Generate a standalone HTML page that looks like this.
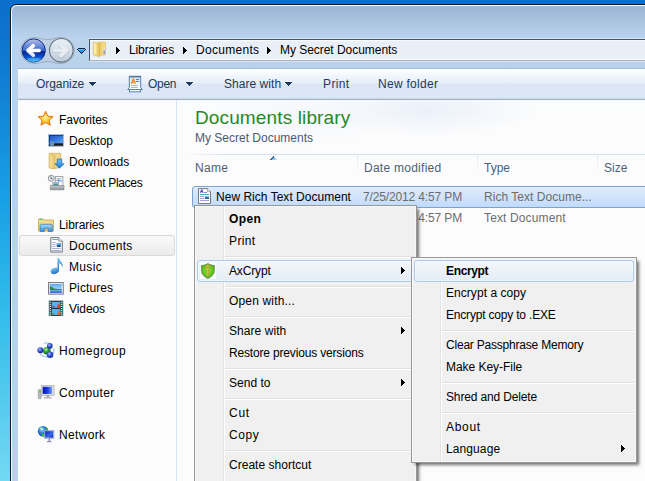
<!DOCTYPE html>
<html><head><meta charset="utf-8">
<style>
*{margin:0;padding:0;box-sizing:border-box}
html,body{width:645px;height:481px;overflow:hidden}
body{position:relative;font-family:"Liberation Sans",sans-serif;font-size:12px;
background:linear-gradient(#0b6dcc 0px,#0f7bd1 70px,#18a0e6 200px,#30bcea 310px,#74d8f2 481px)}
.a{position:absolute}
.t{position:absolute;white-space:nowrap;line-height:16px;font-size:12px;letter-spacing:-0.2px}
#win{left:10px;top:4px;width:700px;height:520px;border:1px solid #121820;border-radius:6px 0 0 0;
background:linear-gradient(#9bb4d2 0px,#bcd3ee 34px,#b9d1ea 60px);overflow:hidden}
#win:before{content:"";position:absolute;left:0;top:0;right:0;bottom:0;border-left:1px solid #f4f7fb;border-top:1px solid #fafcfe;border-radius:6px 0 0 0}
#addr{left:89px;top:39px;width:600px;height:22px;background:linear-gradient(#ffffff 0px,#f0f4fa 1px,#e9eff7 2px,#e9eff7 18px,#edf2f9 19px,#fefefe 20px);border:1px solid #4a5560;border-bottom-color:#a8b4c0;box-shadow:0 -1px 0 #d4e4f8,0 1px 0 #d6e2ef}
#tb{left:18px;top:68px;width:640px;height:32px;border-top:1px solid #a5bdd7;border-bottom:1px solid #a0b0c4;background:linear-gradient(#ffffff 0px,#fcfdff 1px,#e6eef9 14px,#dce5f3 15px,#dbe6f4 27px,#e2edf9 28px,#d0dcea 29px,#d0dcea 30px)}
#content{left:18px;top:100px;width:640px;height:400px;background:#fcfcfc}
#nav{left:18px;top:100px;width:158px;height:400px;background:#fcfcfc}
#navb{left:176px;top:100px;width:1px;height:400px;background:#d5e4f4}
.tbt{color:#1e395b}
.nav{color:#000}
.menu{background:#f0f0f0;border:1px solid #979797;box-shadow:3px 3px 3px -1px rgba(0,0,0,.55),inset 0 0 0 1px #f8f8f8}
.gut{background:#e2e3e3;width:1px;box-shadow:1px 0 0 #fff}
.sep{height:1px;background:#e0e0e0;box-shadow:0 1px 0 #fff}
.hl{border:1px solid #a8cbf3;border-radius:3px;background:linear-gradient(#f4f6f9,#e4ecf7);box-shadow:inset 0 0 0 1px rgba(255,255,255,.45)}
.mt{color:#000}
.arr{width:0;height:0;border-top:3.5px solid transparent;border-bottom:3.5px solid transparent;border-left:4px solid #000}
</style></head><body>
<div id="win" class="a"></div>
<!-- nav buttons -->
<svg class="a" style="left:17px;top:35px" width="74" height="31" viewBox="0 0 74 31">
 <defs>
  <linearGradient id="bkt" x1="0" y1="0" x2="0" y2="1"><stop offset="0" stop-color="#b8c0e8"/><stop offset=".5" stop-color="#3a66d0"/><stop offset=".53" stop-color="#08228a"/><stop offset=".78" stop-color="#0a50d0"/><stop offset="1" stop-color="#30c4ff"/></linearGradient>
  <linearGradient id="fw" x1="0" y1="0" x2="0" y2="1"><stop offset="0" stop-color="#eaf0f6"/><stop offset=".5" stop-color="#d4dfea"/><stop offset="1" stop-color="#bccbdb"/></linearGradient>
  <linearGradient id="ar" x1="0" y1="0" x2="0" y2="1"><stop offset="0" stop-color="#fff"/><stop offset="1" stop-color="#dfe4ee"/></linearGradient>
  <linearGradient id="dd" x1="0" y1="0" x2="0" y2="1"><stop offset="0" stop-color="#52b8f0"/><stop offset="1" stop-color="#1a4f98"/></linearGradient>
 </defs>
 <path d="M16.7 2.5 C22 2.5 25 4.5 30.3 4.5 C35.5 4.5 38.5 2.5 44.3 2.5 A13 13 0 0 1 44.3 28.5 C38.5 28.5 35.5 26.5 30.3 26.5 C25 26.5 22 28.5 16.7 28.5 A13 13 0 0 1 16.7 2.5 Z" fill="#c0d0e3" stroke="#97a8bc" stroke-width="1" opacity=".9"/>
 <circle cx="16.7" cy="15.5" r="11.6" fill="url(#bkt)" stroke="#0b2f86" stroke-width="1"/>
 <ellipse cx="16.7" cy="25" rx="7" ry="2.3" fill="#7ad8ff" opacity=".35"/>
 <path d="M16.2 10.8 L11 15.5 L16.2 20.2" fill="none" stroke="url(#ar)" stroke-width="3.8" stroke-linecap="round" stroke-linejoin="round"/>
 <path d="M12 15.5 L22.3 15.5" stroke="#fff" stroke-width="3.4" stroke-linecap="round"/>
 <circle cx="44.3" cy="15.3" r="11.8" fill="url(#fw)" stroke="#66727f" stroke-width="1.1"/>
 <g transform="translate(0 .6)" opacity=".5"><path d="M44 10.5 L49.5 15.5 L44 20.5" fill="none" stroke="#9aa8b6" stroke-width="4.4" stroke-linecap="round" stroke-linejoin="round"/><path d="M37.5 15.5 L48.5 15.5" stroke="#9aa8b6" stroke-width="4" stroke-linecap="round"/></g>
 <path d="M44 10.5 L49.5 15.5 L44 20.5" fill="none" stroke="#e6ecf2" stroke-width="3.8" stroke-linecap="round" stroke-linejoin="round"/>
 <path d="M37.5 15.5 L48.5 15.5" stroke="#e6ecf2" stroke-width="3.4" stroke-linecap="round"/>

</svg>
<svg class="a" style="left:77px;top:48px" width="9" height="6" viewBox="77 48 9 6" shape-rendering="crispEdges"><path d="M78 48h7v1h-7z M77 49h1v1h-1z M85 49h1v1h-1z M78 50h1v1h-1z M84 50h1v1h-1z M79 51h1v1h-1z M83 51h1v1h-1z M80 52h1v1h-1z M82 52h1v1h-1z M81 53h1v1h-1z" fill="#0c2344"/><path d="M78 49h7v1h-7z" fill="#44c4f2"/><path d="M79 50h5v1h-5z" fill="#3aa0e6"/><path d="M80 51h3v1h-3z" fill="#3a80d6"/><path d="M81 52h1v1h-1z" fill="#3a6ccc"/></svg>
<div id="addr" class="a"></div>
<!-- folder icon in address -->
<svg class="a" style="left:91px;top:40px" width="17" height="18" viewBox="91 40 17 18">
 <defs><linearGradient id="af1" x1="0" y1="0" x2="1" y2="0"><stop offset="0" stop-color="#f9eaa8"/><stop offset=".6" stop-color="#f2d77c"/><stop offset="1" stop-color="#dcb850"/></linearGradient>
 <linearGradient id="af2" x1="0" y1="0" x2="1" y2="0"><stop offset="0" stop-color="#e8c860"/><stop offset="1" stop-color="#f6e090"/></linearGradient></defs>
 <path d="M98 42.2 L104.8 42.2 Q105.5 42.2 105.5 43 L105.5 55 L98 55.5 Z" fill="url(#af2)" stroke="#d8b450" stroke-width=".6"/>
 <path d="M93.3 42.3 L98.8 43.6 L99.5 44.3 L99.5 56.5 L93.8 55.2 L93.3 54.6 Z" fill="url(#af1)" stroke="#d3ae48" stroke-width=".6"/>
 <path d="M94.5 43.5 L95.5 43.8 L95.5 53.5 L94.5 53.2 Z" fill="#fdf6d8"/>
 <rect x="103.6" y="50.5" width="1.1" height="3.2" fill="#3a8ee0"/>
 <rect x="103.6" y="48.8" width="1.1" height="1.5" fill="#e8eef6"/>
</svg>
<svg class="a" style="left:116px;top:47px" width="4" height="7" viewBox="0 0 4 7" shape-rendering="crispEdges"><path d="M0 0h1v7h-1z M1 1h1v5h-1z M2 2h1v3h-1z M3 3h1v1h-1z" fill="#000"/></svg>
<div class="t" style="left:129px;top:42px;color:#000;letter-spacing:-0.11px">Libraries</div>
<svg class="a" style="left:183px;top:47px" width="4" height="7" viewBox="0 0 4 7" shape-rendering="crispEdges"><path d="M0 0h1v7h-1z M1 1h1v5h-1z M2 2h1v3h-1z M3 3h1v1h-1z" fill="#000"/></svg>
<div class="t" style="left:196px;top:42px;color:#000;letter-spacing:0.30px">Documents</div>
<svg class="a" style="left:267px;top:47px" width="4" height="7" viewBox="0 0 4 7" shape-rendering="crispEdges"><path d="M0 0h1v7h-1z M1 1h1v5h-1z M2 2h1v3h-1z M3 3h1v1h-1z" fill="#000"/></svg>
<div class="t" style="left:280px;top:42px;color:#000;letter-spacing:-0.04px">My Secret Documents</div>

<div id="tb" class="a"></div>
<div class="t tbt" style="left:36px;top:76px;letter-spacing:-0.06px">Organize</div>
<svg class="a" style="left:89px;top:81px" width="7" height="5" viewBox="0 0 7 5" shape-rendering="crispEdges"><rect x="0" y="0" width="7" height="1" fill="#fff" opacity=".7"/><path d="M0 1h7v1h-7z M1 2h5v1h-5z M2 3h3v1h-3z M3 4h1v1h-1z" fill="#1b3a62"/></svg>
<!-- open icon -->
<svg class="a" style="left:126px;top:74px" width="18" height="20" viewBox="126 74 18 20">
 <defs><linearGradient id="pg" x1="0" y1="0" x2="0" y2="1"><stop offset="0" stop-color="#d8e8f8"/><stop offset="1" stop-color="#ffffff"/></linearGradient></defs>
 <path d="M129.3 76.3 L140.7 76.3 L140.7 87.5 L142.3 89.5 L127.7 89.5 L129.3 87.5 Z" fill="url(#pg)" stroke="#5a82b0" stroke-width="1"/>
 <rect x="129" y="76" width="12" height="1.4" fill="#4a76aa"/>
 <path d="M131.2 84 L133.3 78.8 L135.4 84 M131.8 82.4 L134.8 82.4" fill="none" stroke="#f28a28" stroke-width="1.3"/>
 <rect x="135.8" y="79" width="3.4" height="1" fill="#4a80d2"/>
 <rect x="135.8" y="81" width="3.4" height="1" fill="#4a80d2"/>
 <rect x="131" y="85.2" width="7" height=".8" fill="#9ca8b6"/>
 <rect x="131" y="87.2" width="7" height=".8" fill="#9ca8b6"/>
 <rect x="129.5" y="89.5" width="11" height="2.3" fill="#f4f8fc" stroke="#5a82b0" stroke-width="1"/>
</svg>
<div class="t tbt" style="left:148px;top:76px;letter-spacing:-0.27px">Open</div>
<svg class="a" style="left:186px;top:81px" width="7" height="5" viewBox="0 0 7 5" shape-rendering="crispEdges"><rect x="0" y="0" width="7" height="1" fill="#fff" opacity=".7"/><path d="M0 1h7v1h-7z M1 2h5v1h-5z M2 3h3v1h-3z M3 4h1v1h-1z" fill="#1b3a62"/></svg>
<div class="t tbt" style="left:224px;top:76px;letter-spacing:0.04px">Share with</div>
<svg class="a" style="left:285px;top:81px" width="7" height="5" viewBox="0 0 7 5" shape-rendering="crispEdges"><rect x="0" y="0" width="7" height="1" fill="#fff" opacity=".7"/><path d="M0 1h7v1h-7z M1 2h5v1h-5z M2 3h3v1h-3z M3 4h1v1h-1z" fill="#1b3a62"/></svg>
<div class="t tbt" style="left:323px;top:76px;letter-spacing:0.38px">Print</div>
<div class="t tbt" style="left:378px;top:76px;letter-spacing:0.28px">New folder</div>

<div id="content" class="a"></div>
<div class="a" style="left:177px;top:100px;width:470px;height:54px;background:radial-gradient(ellipse 110px 26px at 250px 10px,rgba(232,239,249,.85),rgba(255,255,255,0)),radial-gradient(ellipse 90px 30px at 120px 18px,rgba(240,244,251,.7),rgba(255,255,255,0)),linear-gradient(#fbfcfd,#fcfcfc)"></div>
<div id="navb" class="a"></div>

<!-- nav pane -->
<svg class="a" style="left:36px;top:109px" width="20" height="19" viewBox="36 109 20 19"><defs><radialGradient id="st" cx="48%" cy="45%" r="55%"><stop offset="0" stop-color="#fff6a8"/><stop offset=".55" stop-color="#fcc62e"/><stop offset="1" stop-color="#f39a1c"/></radialGradient></defs>
<path d="M45.6 111.3 L47.9 116.2 L53.1 116.7 L49.2 120.2 L50.3 125.2 L45.6 122.6 L40.9 125.2 L42 120.2 L38.1 116.7 L43.3 116.2 Z" fill="url(#st)" stroke="#e2781e" stroke-width="1" stroke-linejoin="round"/></svg>
<div class="t nav" style="left:59px;top:112px;letter-spacing:-0.06px">Favorites</div>
<svg class="a" style="left:47px;top:133px" width="18" height="15" viewBox="47 133 18 15"><defs><linearGradient id="dk" x1="0" y1="0" x2="1" y2="1"><stop offset="0" stop-color="#1e4eb8"/><stop offset=".6" stop-color="#3a7ee0"/><stop offset="1" stop-color="#62aaf4"/></linearGradient></defs>
<rect x="48.4" y="134.3" width="15.3" height="12" fill="#c4d6ea" stroke="#8aa6c6" stroke-width=".6"/>
<rect x="49" y="135" width="14" height="8.2" fill="url(#dk)"/>
<rect x="49" y="135" width="14" height=".8" fill="#0a3090"/><rect x="49" y="135" width=".8" height="8.2" fill="#0a3090"/>
<rect x="49" y="143.2" width="14" height="2.6" fill="#1c1a18"/>
<circle cx="51.8" cy="143.6" r="2" fill="#2a78d8" stroke="#9cc8f4" stroke-width=".5"/>
<rect x="50.8" y="142.6" width="1" height="1" fill="#f04a2a"/><rect x="51.9" y="142.6" width="1" height="1" fill="#6ac83a"/><rect x="50.8" y="143.7" width="1" height="1" fill="#3aa0f0"/><rect x="51.9" y="143.7" width="1" height="1" fill="#f8c02a"/></svg>
<div class="t nav" style="left:69px;top:133px;letter-spacing:0.00px">Desktop</div>
<svg class="a" style="left:47px;top:152px" width="19" height="18" viewBox="47 152 19 18"><defs><linearGradient id="dlf" x1="0" y1="0" x2="1" y2="0"><stop offset="0" stop-color="#f7e4a0"/><stop offset="1" stop-color="#e6c466"/></linearGradient><linearGradient id="dla" x1="0" y1="0" x2="0" y2="1"><stop offset="0" stop-color="#6cc4f6"/><stop offset="1" stop-color="#1a78d0"/></linearGradient></defs>
<path d="M49.3 153.3 L60.8 153.3 L60.8 167 L55 168.6 L49.3 168 Z" fill="#f0d88a" stroke="#d2ae50" stroke-width=".7"/>
<path d="M49.3 153.5 L54.8 155.2 L54.8 168.6 L49.3 167.8 Z" fill="url(#dlf)" stroke="#d2ae50" stroke-width=".6"/>
<path d="M57.2 159 L61.8 159 L61.8 163.8 L64 163.8 L59.5 168.3 L55 163.8 L57.2 163.8 Z" fill="url(#dla)" stroke="#1c66b8" stroke-width=".7" stroke-linejoin="round"/></svg>
<div class="t nav" style="left:69px;top:154px;letter-spacing:0.11px">Downloads</div>
<svg class="a" style="left:47px;top:173px" width="19" height="19" viewBox="47 173 19 19"><defs><linearGradient id="tray" x1="0" y1="0" x2="0" y2="1"><stop offset="0" stop-color="#c8ccd0"/><stop offset="1" stop-color="#8a9096"/></linearGradient></defs>
<rect x="55.3" y="176.5" width="7.6" height="9.5" fill="#fafafa" stroke="#8f959b" stroke-width=".8"/>
<rect x="56.5" y="178" width="5" height=".8" fill="#a8aeb4"/>
<rect x="56.5" y="179.8" width="1.5" height="1.2" fill="#9aa2aa"/><circle cx="58.8" cy="180.6" r="1" fill="#2a7ae8"/><circle cx="61" cy="180.8" r=".9" fill="#4aa0f0"/>
<rect x="52.7" y="182.6" width="6" height="3.6" fill="#f0f2f4" stroke="#8f959b" stroke-width=".7"/>
<rect x="53.5" y="183.3" width="4.4" height="2.2" fill="#4a9ad0"/><rect x="53.5" y="184.5" width="4.4" height="1" fill="#3a8a5a"/>
<path d="M50.3 185.6 L64 185.6 L64 189.8 L50.3 189.8 Z" fill="url(#tray)" stroke="#7a8086" stroke-width=".6"/>
<circle cx="51.3" cy="178.3" r="3" fill="#e8eef2" stroke="#80868c" stroke-width=".9"/>
<path d="M51 176.6 L51 178.6 L52.6 178.9" fill="none" stroke="#404850" stroke-width=".8"/></svg>
<div class="t nav" style="left:69px;top:175px;letter-spacing:-0.31px">Recent Places</div>
<svg class="a" style="left:36px;top:216px" width="20" height="18" viewBox="36 216 20 18"><defs><linearGradient id="lbf" x1="0" y1="0" x2="0" y2="1"><stop offset="0" stop-color="#f6e39e"/><stop offset="1" stop-color="#e2bf5c"/></linearGradient><linearGradient id="lba" x1="0" y1="0" x2="0" y2="1"><stop offset="0" stop-color="#a8dcfa"/><stop offset="1" stop-color="#2f8ee0"/></linearGradient></defs>
<path d="M38.5 219 L43 219 L44 220 L53.5 220 L53.5 231 L38.5 231 Z" fill="url(#lbf)" stroke="#c9a448" stroke-width=".8"/>
<rect x="39.5" y="218.7" width="3" height="1.3" fill="#5ac85a"/>
<path d="M40.2 231.5 L40.2 225.5 Q40.2 224.3 41.5 224.3 L51 224.3 Q52.3 224.3 52.3 225.5 L52.3 231.5 L48.2 231.5 L48.2 228.2 L44.3 228.2 L44.3 231.5 Z" fill="url(#lba)" stroke="#2a78c8" stroke-width=".7"/></svg>
<div class="t nav" style="left:59px;top:217px;letter-spacing:-0.09px">Libraries</div>
<div class="a" style="left:19px;top:235px;width:156px;height:21px;border:1px solid #d9d9d9;border-radius:3px;background:linear-gradient(#fafafa,#ebebeb)"></div>
<svg class="a" style="left:49px;top:236px" width="15" height="18" viewBox="49 236 15 18"><path d="M50.8 237.6 L58.8 237.6 L62.3 241.1 L62.3 252 L50.8 252 Z" fill="#fdfdfd" stroke="#6e7378" stroke-width="1"/>
<path d="M58.8 237.6 L58.8 241.1 L62.3 241.1" fill="#f2f2f2" stroke="#6e7378" stroke-width=".8"/>
<rect x="52.2" y="239.2" width="6" height=".8" fill="#3aa0a8"/>
<g fill="#8a90d0"><rect x="52.2" y="242" width="3.4" height=".7"/><rect x="52.2" y="244.1" width="3.4" height=".7"/><rect x="52.2" y="246.2" width="3.4" height=".7"/><rect x="52.2" y="248.2" width="8.6" height=".7"/><rect x="52.2" y="250.2" width="8.6" height=".7"/></g>
<rect x="56.8" y="243" width="4" height="4" fill="#2a5a7a"/><rect x="56.8" y="243" width="4" height="2" fill="#5ab0e8"/></svg>
<div class="t nav" style="left:69px;top:238px;letter-spacing:0.33px">Documents</div>
<svg class="a" style="left:48px;top:256px" width="17" height="20" viewBox="48 256 17 20"><defs><linearGradient id="mu" x1="0" y1="0" x2="0" y2="1"><stop offset="0" stop-color="#7ac8f6"/><stop offset="1" stop-color="#1a6ac8"/></linearGradient></defs>
<path d="M57.5 258 L59 258 Q60 261 62 263 Q63.5 265 62.3 268 Q62.5 264.5 59 263 L59 271 L57.5 271 Z" fill="url(#mu)"/>
<ellipse cx="54.8" cy="270.8" rx="4.3" ry="3.1" transform="rotate(-20 54.8 270.8)" fill="url(#mu)"/></svg>
<div class="t nav" style="left:69px;top:259px;letter-spacing:0.33px">Music</div>
<svg class="a" style="left:47px;top:280px" width="19" height="17" viewBox="47 280 19 17"><defs><linearGradient id="sky" x1="0" y1="0" x2="0" y2="1"><stop offset="0" stop-color="#5aa8f0"/><stop offset="1" stop-color="#d8f2fa"/></linearGradient><linearGradient id="wat" x1="0" y1="0" x2="0" y2="1"><stop offset="0" stop-color="#6ab0e8"/><stop offset="1" stop-color="#1a5ac0"/></linearGradient></defs>
<rect x="48.6" y="282.6" width="14.6" height="11.5" fill="#fff" stroke="#707070" stroke-width="1"/>
<rect x="49.9" y="283.9" width="11.9" height="9" fill="url(#sky)"/>
<path d="M49.9 286 Q52 286.5 54 288.5 Q57 289.3 61.8 289.3 L61.8 290.3 L49.9 290.3 Z" fill="#2a8a3a"/>
<rect x="49.9" y="290.2" width="11.9" height="2.7" fill="url(#wat)"/></svg>
<div class="t nav" style="left:69px;top:280px;letter-spacing:0.11px">Pictures</div>
<svg class="a" style="left:47px;top:299px" width="18" height="19" viewBox="47 299 18 19"><rect x="48.9" y="300.7" width="14.2" height="15.2" fill="#1e2a2a"/><rect x="48.9" y="300.7" width="1" height="15.2" fill="#2a8a80"/><rect x="62.1" y="300.7" width="1" height="15.2" fill="#2a8a80"/><rect x="51.8" y="301.8" width="8.6" height="6.3" fill="#52b2f2"/><rect x="51.8" y="309" width="8.6" height="6" fill="#52b2f2"/><path d="M57.5 305 Q59 303 60.4 304 L60.4 308.1 L56.5 308.1 Z" fill="#d04a3a"/><path d="M52 306 Q54 305 55.5 307 L55.5 308.1 L51.8 308.1 Z" fill="#a04a8a" opacity=".8"/><path d="M58 311 Q59.5 310 60.4 311 L60.4 315 L57 315 Z" fill="#d86a3a"/><path d="M52 313 Q53.5 312.5 54.5 314 L54.5 315 L51.8 315 Z" fill="#5a9a4a" opacity=".8"/><rect x="49.9" y="301.7" width="1.2" height="1.1" fill="#f4f4f4"/><rect x="60.9" y="301.7" width="1.2" height="1.1" fill="#f4f4f4"/><rect x="49.9" y="303.8" width="1.2" height="1.1" fill="#f4f4f4"/><rect x="60.9" y="303.8" width="1.2" height="1.1" fill="#f4f4f4"/><rect x="49.9" y="305.9" width="1.2" height="1.1" fill="#f4f4f4"/><rect x="60.9" y="305.9" width="1.2" height="1.1" fill="#f4f4f4"/><rect x="49.9" y="308.0" width="1.2" height="1.1" fill="#f4f4f4"/><rect x="60.9" y="308.0" width="1.2" height="1.1" fill="#f4f4f4"/><rect x="49.9" y="310.1" width="1.2" height="1.1" fill="#f4f4f4"/><rect x="60.9" y="310.1" width="1.2" height="1.1" fill="#f4f4f4"/><rect x="49.9" y="312.2" width="1.2" height="1.1" fill="#f4f4f4"/><rect x="60.9" y="312.2" width="1.2" height="1.1" fill="#f4f4f4"/><rect x="49.9" y="314.3" width="1.2" height="1.1" fill="#f4f4f4"/><rect x="60.9" y="314.3" width="1.2" height="1.1" fill="#f4f4f4"/></svg>
<div class="t nav" style="left:69px;top:301px;letter-spacing:-0.08px">Videos</div>
<svg class="a" style="left:35px;top:340px" width="20" height="20" viewBox="35 340 20 20"><defs><radialGradient id="hgb" cx="40%" cy="35%" r="60%"><stop offset="0" stop-color="#b0c8ff"/><stop offset=".5" stop-color="#3a5ad8"/><stop offset="1" stop-color="#1a2a98"/></radialGradient><radialGradient id="hgg" cx="40%" cy="35%" r="60%"><stop offset="0" stop-color="#c0f0b0"/><stop offset=".5" stop-color="#2aa82a"/><stop offset="1" stop-color="#0a6a1a"/></radialGradient></defs>
<path d="M40 353 Q42 357 47 357 M44 343.5 Q48 342 51 344.5 M53.5 348 Q54.5 352 52.5 354" fill="none" stroke="#8ab0e0" stroke-width="1.3" opacity=".7"/>
<circle cx="46.8" cy="350.7" r="3.8" fill="url(#hgg)"/>
<circle cx="49.8" cy="345.9" r="2.8" fill="url(#hgb)"/>
<circle cx="40.4" cy="350.3" r="3" fill="url(#hgb)"/>
<circle cx="50" cy="354.8" r="3.3" fill="url(#hgb)"/></svg>
<div class="t nav" style="left:59px;top:343px;letter-spacing:0.50px">Homegroup</div>
<svg class="a" style="left:36px;top:383px" width="20" height="17" viewBox="36 383 20 17"><defs><linearGradient id="scr" x1="0" y1="0" x2="1" y2="0"><stop offset="0" stop-color="#0814b8"/><stop offset=".5" stop-color="#1a3ae0"/><stop offset="1" stop-color="#6a9af0"/></linearGradient></defs>
<rect x="38.3" y="389.5" width="2.8" height="9.2" rx=".8" fill="#b8bcc0" stroke="#7a7e82" stroke-width=".5"/>
<rect x="38.8" y="391" width="1.8" height="1.2" fill="#3ae03a"/>
<rect x="41.5" y="385.3" width="12.6" height="10.4" fill="#dcdcdc" stroke="#a8a8a8" stroke-width=".6"/>
<rect x="42.7" y="386.8" width="9.3" height="7.1" fill="url(#scr)"/>
<rect x="46.5" y="395.7" width="2.6" height="1.5" fill="#a0a0a0"/>
<rect x="44" y="397" width="7.5" height="1.5" fill="#b8b8b8"/></svg>
<div class="t nav" style="left:59px;top:385px;letter-spacing:0.36px">Computer</div>
<svg class="a" style="left:36px;top:424px" width="20" height="20" viewBox="36 424 20 20"><defs><radialGradient id="glb" cx="40%" cy="35%" r="65%"><stop offset="0" stop-color="#a0d8ff"/><stop offset=".5" stop-color="#2a7ae0"/><stop offset="1" stop-color="#0a3aa8"/></radialGradient><linearGradient id="scr2" x1="0" y1="0" x2="1" y2="1"><stop offset="0" stop-color="#0a1cc0"/><stop offset=".6" stop-color="#3a6ae8"/><stop offset="1" stop-color="#1a2ab8"/></linearGradient></defs>
<circle cx="43.1" cy="431.3" r="5.3" fill="url(#glb)"/>
<path d="M39.5 428 Q41 426.5 43 427 Q43.5 429 41.5 430 Q40 430.5 39.5 428 Z M41 433.5 Q43.5 433 45 435 Q44 436.5 42 436 Z M45.5 427.5 Q47 428 47.8 429.5 L46 430 Z" fill="#2ac830"/>
<circle cx="41.5" cy="428.8" r="1.2" fill="#fff" opacity=".8"/>
<rect x="44.2" y="430.3" width="9.8" height="8.2" fill="#b8c4d4" stroke="#8898b0" stroke-width=".5"/>
<rect x="45.1" y="431.2" width="8" height="6.4" fill="url(#scr2)"/>
<rect x="48.6" y="438.5" width="1.6" height="2.5" fill="#8a96a8"/>
<rect x="47" y="441" width="4.5" height="1.2" fill="#8a96a8"/></svg>
<div class="t nav" style="left:59px;top:427px;letter-spacing:0.35px">Network</div>

<!-- content header -->
<div class="t" style="left:195px;top:107px;font-size:19px;line-height:22px;color:#268a26;letter-spacing:0.13px">Documents library</div>
<div class="t" style="left:195px;top:130px;color:#4e5a6e;letter-spacing:0.00px">My Secret Documents</div>
<div class="a" style="left:185px;top:154px;width:470px;height:1px;background:linear-gradient(90deg,rgba(213,226,243,0),#d5e2f3 40px)"></div>
<svg class="a" style="left:270px;top:156px" width="7" height="4" viewBox="0 0 7 4" shape-rendering="crispEdges"><path d="M3 0h1v1h-1z M2 1h1v1h-1z M1 2h1v1h-1z M0 3h1v1h-1z" fill="#2e4e6e"/><path d="M3 1h1v1h-1z M2 2h1v1h-1z M1 3h1v1h-1z" fill="#4a88b4"/><path d="M4 1h1v1h-1z M3 2h2v1h-2z M2 3h3v1h-3z" fill="#86c6ea"/><path d="M5 2h1v1h-1z M5 3h2v1h-2z" fill="#b4def4"/></svg>
<div class="a" style="left:357px;top:155px;width:1px;height:22px;background:linear-gradient(#dfe8f3,#fff)"></div>
<div class="a" style="left:477px;top:155px;width:1px;height:22px;background:linear-gradient(#dfe8f3,#fff)"></div>
<div class="a" style="left:597px;top:155px;width:1px;height:22px;background:linear-gradient(#dfe8f3,#fff)"></div>
<div class="t" style="left:195px;top:160px;color:#4c607a;letter-spacing:0.33px">Name</div>
<div class="t" style="left:364px;top:160px;color:#4c607a;letter-spacing:0.26px">Date modified</div>
<div class="t" style="left:484px;top:160px;color:#4c607a;letter-spacing:0">Type</div>
<div class="t" style="left:604px;top:160px;color:#4c607a;letter-spacing:0">Size</div>

<!-- rows -->
<div class="a" style="left:192px;top:186px;width:470px;height:22px;border:1px solid #7da2ce;border-radius:3px;background:linear-gradient(#ebf4fe 0px,#dcebfc 1px,#c1dbfc 20px)"></div>
<svg class="a" style="left:197px;top:187px" width="15" height="18" viewBox="197 187 15 18"><path d="M198.5 188.6 L207.5 188.6 L210.5 191.6 L210.5 203.6 L198.5 203.6 Z" fill="#fdfdfd" stroke="#74797e" stroke-width="1"/>
<path d="M207.5 188.6 L207.5 191.6 L210.5 191.6" fill="#eee" stroke="#8a8f94" stroke-width=".7"/>
<path d="M200.2 192.8 L201.8 189.6 L203 192.8 M200.7 191.8 L202.6 191.8" fill="none" stroke="#3a3ad0" stroke-width="1"/>
<rect x="204" y="192" width="3" height=".8" fill="#6a6ad0"/>
<rect x="200" y="194.1" width="9" height=".9" fill="#3aa898"/>
<g fill="#7a80b0"><rect x="200" y="196.1" width="4" height=".7"/><rect x="200" y="198.2" width="4" height=".7"/><rect x="200" y="200.3" width="9" height=".7"/></g>
<rect x="205" y="196" width="4" height="3" fill="#2a5a6a"/><rect x="205" y="196" width="4" height="1.4" fill="#6ab8e8"/></svg>
<div class="t" style="left:216px;top:189px;color:#000;letter-spacing:0.02px">New Rich Text Document</div>
<div class="t" style="left:363px;top:189px;color:#6d6d6d;letter-spacing:-0.14px">7/25/2012 4:57 PM</div>
<div class="t" style="left:484px;top:189px;color:#6d6d6d;letter-spacing:0.03px">Rich Text Docume...</div>
<div class="t" style="left:363px;top:210px;color:#6d6d6d;letter-spacing:-0.14px">7/25/2012 4:57 PM</div>
<div class="t" style="left:484px;top:210px;color:#6d6d6d;letter-spacing:0.13px">Text Document</div>

<!-- context menu -->
<div class="a menu" style="left:194px;top:205px;width:223px;height:300px"></div>
<div class="a gut" style="left:223px;top:206px;height:290px"></div>
<div class="t mt" style="left:229px;top:211px;font-weight:bold;letter-spacing:0.40px">Open</div>
<div class="t mt" style="left:229px;top:233px;letter-spacing:0.38px">Print</div>
<div class="a sep" style="left:225px;top:256px;width:189px"></div>
<div class="a hl" style="left:197px;top:260px;width:217px;height:22px"></div>
<svg class="a" style="left:199px;top:262px" width="18" height="18" viewBox="199 262 18 18">
 <defs><radialGradient id="sh" cx="50%" cy="45%" r="60%"><stop offset="0" stop-color="#8ce83a"/><stop offset=".7" stop-color="#5cc020"/><stop offset="1" stop-color="#3a9a18"/></radialGradient>
 <linearGradient id="ky" x1="0" y1="0" x2="1" y2="0"><stop offset="0" stop-color="#e88a28"/><stop offset=".5" stop-color="#fcc060"/><stop offset="1" stop-color="#e08020"/></linearGradient></defs>
 <rect x="200" y="263" width="16" height="16" fill="#fff"/>
 <path d="M207.9 263.6 Q211 265.3 214.4 265.6 L214.4 270.5 Q214.2 276 207.9 278.6 Q201.6 276 201.4 270.5 L201.4 265.6 Q204.8 265.3 207.9 263.6 Z" fill="url(#sh)" stroke="#5a6a4a" stroke-width=".7" stroke-opacity=".8"/>
 <circle cx="207.8" cy="267.4" r="1.9" fill="none" stroke="url(#ky)" stroke-width="1.1"/>
 <rect x="207" y="269.2" width="1.7" height="6.8" fill="url(#ky)"/>
</svg>
<div class="t mt" style="left:229px;top:263px;letter-spacing:-0.15px">AxCrypt</div>
<svg class="a" style="left:401px;top:267px" width="4" height="7" viewBox="0 0 4 7" shape-rendering="crispEdges"><path d="M0 0h1v7h-1z M1 1h1v5h-1z M2 2h1v3h-1z M3 3h1v1h-1z" fill="#000"/></svg>
<div class="a sep" style="left:225px;top:286px;width:189px"></div>
<div class="t mt" style="left:229px;top:293px;letter-spacing:0.16px">Open with...</div>
<div class="a sep" style="left:225px;top:316px;width:189px"></div>
<div class="t mt" style="left:229px;top:323px;letter-spacing:0.06px">Share with</div>
<svg class="a" style="left:401px;top:327px" width="4" height="7" viewBox="0 0 4 7" shape-rendering="crispEdges"><path d="M0 0h1v7h-1z M1 1h1v5h-1z M2 2h1v3h-1z M3 3h1v1h-1z" fill="#000"/></svg>
<div class="t mt" style="left:229px;top:345px;letter-spacing:-0.17px">Restore previous versions</div>
<div class="a sep" style="left:225px;top:368px;width:189px"></div>
<div class="t mt" style="left:229px;top:375px;letter-spacing:0.03px">Send to</div>
<svg class="a" style="left:401px;top:379px" width="4" height="7" viewBox="0 0 4 7" shape-rendering="crispEdges"><path d="M0 0h1v7h-1z M1 1h1v5h-1z M2 2h1v3h-1z M3 3h1v1h-1z" fill="#000"/></svg>
<div class="a sep" style="left:225px;top:398px;width:189px"></div>
<div class="t mt" style="left:229px;top:405px;letter-spacing:0.75px">Cut</div>
<div class="t mt" style="left:229px;top:427px;letter-spacing:0.57px">Copy</div>
<div class="a sep" style="left:225px;top:450px;width:189px"></div>
<div class="t mt" style="left:229px;top:457px;letter-spacing:0.02px">Create shortcut</div>

<!-- submenu -->
<div class="a menu" style="left:411px;top:257px;width:226px;height:206px"></div>
<div class="a gut" style="left:440px;top:258px;height:204px"></div>
<div class="a hl" style="left:414px;top:260px;width:220px;height:22px"></div>
<div class="t mt" style="left:446px;top:263px;font-weight:bold;letter-spacing:-0.35px">Encrypt</div>
<div class="t mt" style="left:446px;top:285px;letter-spacing:0.05px">Encrypt a copy</div>
<div class="t mt" style="left:446px;top:307px;letter-spacing:-0.19px">Encrypt copy to .EXE</div>
<div class="a sep" style="left:442px;top:330px;width:192px"></div>
<div class="t mt" style="left:446px;top:337px;letter-spacing:-0.21px">Clear Passphrase Memory</div>
<div class="t mt" style="left:446px;top:359px;letter-spacing:-0.04px">Make Key-File</div>
<div class="a sep" style="left:442px;top:382px;width:192px"></div>
<div class="t mt" style="left:446px;top:389px;letter-spacing:-0.15px">Shred and Delete</div>
<div class="a sep" style="left:442px;top:412px;width:192px"></div>
<div class="t mt" style="left:446px;top:419px;letter-spacing:0.68px">About</div>
<div class="t mt" style="left:446px;top:441px;letter-spacing:0.10px">Language</div>
<svg class="a" style="left:621px;top:445px" width="4" height="7" viewBox="0 0 4 7" shape-rendering="crispEdges"><path d="M0 0h1v7h-1z M1 1h1v5h-1z M2 2h1v3h-1z M3 3h1v1h-1z" fill="#000"/></svg>
</body></html>
